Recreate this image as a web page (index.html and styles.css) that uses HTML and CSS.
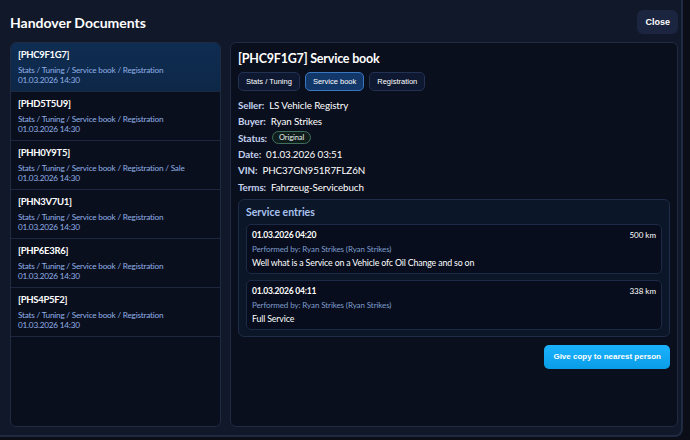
FILE: index.html
```html
<!DOCTYPE html>
<html lang="en">
    <head>
        <meta charset="UTF-8" />
        <meta name="viewport" content="width=device-width, initial-scale=1.0" />
        <title>Handover Documents</title>
        <link rel="stylesheet" href="styles.css">
    </head>
    <body>
        <div class="modal">
            <div class="header">
                <h1>Handover Documents</h1>
                <button class="close">Close</button>
            </div>
            <div class="content">
                <div class="list">
                    <div class="item active">
                        <div class="id">[PHC9F1G7]</div>
                        <div class="meta">Stats / Tuning / Service book / Registration</div>
                        <div class="meta">01.03.2026 14:30</div>
                    </div>
                    <div class="item">
                        <div class="id">[PHD5T5U9]</div>
                        <div class="meta">Stats / Tuning / Service book / Registration</div>
                        <div class="meta">01.03.2026 14:30</div>
                    </div>
                    <div class="item">
                        <div class="id">[PHH0Y9T5]</div>
                        <div class="meta">Stats / Tuning / Service book / Registration / Sale</div>
                        <div class="meta">01.03.2026 14:30</div>
                    </div>
                    <div class="item">
                        <div class="id">[PHN3V7U1]</div>
                        <div class="meta">Stats / Tuning / Service book / Registration</div>
                        <div class="meta">01.03.2026 14:30</div>
                    </div>
                    <div class="item">
                        <div class="id">[PHP6E3R6]</div>
                        <div class="meta">Stats / Tuning / Service book / Registration</div>
                        <div class="meta">01.03.2026 14:30</div>
                    </div>
                    <div class="item">
                        <div class="id">[PHS4P5F2]</div>
                        <div class="meta">Stats / Tuning / Service book / Registration</div>
                        <div class="meta">01.03.2026 14:30</div>
                    </div>
                </div>
                <div class="detail">
                    <h2>[PHC9F1G7] Service book</h2>
                    <div class="tabs">
                        <button class="tab">Stats / Tuning</button>
                        <button class="tab active">Service book</button>
                        <button class="tab">Registration</button>
                    </div>
                    <div class="fields">
                        <div class="field"><span class="label">Seller:</span> LS Vehicle Registry</div>
                        <div class="field"><span class="label">Buyer:</span> Ryan Strikes</div>
                        <div class="field"><span class="label">Status:</span> <span class="badge">Original</span></div>
                        <div class="field"><span class="label">Date:</span> 01.03.2026 03:51</div>
                        <div class="field"><span class="label">VIN:</span> PHC37GN951R7FLZ6N</div>
                        <div class="field"><span class="label">Terms:</span> Fahrzeug-Servicebuch</div>
                    </div>
                    <div class="entries">
                        <h3>Service entries</h3>
                        <div class="entry">
                            <div class="entry-top">
                                <span class="entry-date">01.03.2026 04:20</span>
                                <span class="km">500 km</span>
                            </div>
                            <div class="by">Performed by: Ryan Strikes (Ryan Strikes)</div>
                            <div class="note">Well what is a Service on a Vehicle ofc Oil Change and so on</div>
                        </div>
                        <div class="entry">
                            <div class="entry-top">
                                <span class="entry-date">01.03.2026 04:11</span>
                                <span class="km">338 km</span>
                            </div>
                            <div class="by">Performed by: Ryan Strikes (Ryan Strikes)</div>
                            <div class="note">Full Service</div>
                        </div>
                    </div>
                    <div class="actions">
                        <button class="give">Give copy to nearest person</button>
                    </div>
                </div>
            </div>
        </div>
    </body>
</html>
```

FILE: styles.css
```css
body {
    margin: 0;
    background: #0b0e16;
    font-family: Lato, "Open Sans", sans-serif;
    color: #ffffff;
}
.modal {
    width: 683px;
    height: 437px;
    box-sizing: border-box;
    background: #111829;
    border-right: 2px solid #1e2942;
    border-bottom: 2px solid #1e2942;
    border-bottom-right-radius: 8px;
    padding: 10px 3px 8px 10px;
    display: flex;
    flex-direction: column;
}
.header {
    display: flex;
    justify-content: space-between;
    align-items: center;
    height: 24px;
    margin-bottom: 8px;
}
h1 {
    margin: 0;
    font-size: 14px;
    font-weight: 700;
    padding-top: 1px;
}
button {
    font-family: "Liberation Sans", Arial, sans-serif;
    color: #ffffff;
    cursor: pointer;
}
.close {
    background: #1b2540;
    border: none;
    border-radius: 6px;
    padding: 0 8px;
    height: 24px;
    font-size: 9px;
    font-weight: 700;
}
.content {
    flex: 1;
    display: flex;
    gap: 9px;
    min-height: 0;
}
.list {
    width: 211px;
    box-sizing: border-box;
    background: #0a0f1e;
    border: 1px solid #1f2a43;
    border-radius: 6px;
    overflow: hidden;
}
.item {
    height: 49px;
    box-sizing: border-box;
    padding: 6px 7px;
    border-bottom: 1px solid #1d2740;
}
.item.active {
    background: linear-gradient(180deg, #0f2d52, #0d2747);
}
.id {
    font-size: 9.5px;
    letter-spacing: -0.3px;
    font-weight: 700;
    margin-bottom: 5px;
}
.meta {
    font-size: 8.2px;
    letter-spacing: -0.2px;
    color: #90b0e6;
    line-height: 10px;
}
.detail {
    flex: 1;
    background: #0a0f1e;
    border: 1px solid #1f2a43;
    border-radius: 6px;
    padding: 7px 7px;
    display: flex;
    flex-direction: column;
}
h2 {
    margin: 0 0 5px 0;
    font-size: 12.5px;
    letter-spacing: -0.2px;
    font-weight: 700;
    line-height: 17px;
}
.tabs {
    display: flex;
    gap: 5px;
    margin-bottom: 6px;
}
.tab {
    height: 19px;
    padding: 0 7px;
    background: #0e1830;
    border: 1px solid #233152;
    border-radius: 5px;
    font-size: 7.5px;
}
.tab.active {
    background: #12386a;
    border-color: #3a76c0;
}
.fields {
    font-size: 9.8px;
    letter-spacing: -0.1px;
}
.field {
    height: 16.3px;
    display: flex;
    align-items: center;
    gap: 5px;
}
.label {
    font-weight: 700;
    color: #c3d2ee;
}
.badge {
    font-size: 7.5px;
    padding: 1px 6px;
    border: 1px solid #3f6e5a;
    border-radius: 8px;
    background: #0f1d1c;
    color: #e6f0ea;
}
.entries {
    margin-top: 4px;
    background: #0c1629;
    border: 1px solid #1f2c48;
    border-radius: 6px;
    padding: 6px 7px 6px 7px;
    display: flex;
    flex-direction: column;
    gap: 6px;
}
h3 {
    margin: 0;
    font-size: 10.5px;
    font-weight: 700;
    color: #a9c3ee;
}
.entry {
    background: #070d1c;
    border: 1px solid #1d2a45;
    border-radius: 5px;
    padding: 4px 5px 5px 5px;
}
.entry-top {
    display: flex;
    justify-content: space-between;
    align-items: center;
    height: 12px;
}
.entry-date {
    font-size: 8.5px;
    letter-spacing: -0.2px;
    font-weight: 700;
}
.km {
    font-size: 8px;
}
.by {
    font-size: 8px;
    letter-spacing: -0.1px;
    color: #7f9ccc;
    margin-top: 3px;
}
.note {
    font-size: 8.8px;
    letter-spacing: -0.15px;
    margin-top: 3px;
}
.actions {
    display: flex;
    justify-content: flex-end;
    margin-top: 8px;
}
.give {
    height: 24px;
    padding: 0 9px;
    border: none;
    border-radius: 5px;
    background: linear-gradient(180deg, #1ab2ff, #0a9de6);
    font-size: 8px;
    font-weight: 700;
}
```
